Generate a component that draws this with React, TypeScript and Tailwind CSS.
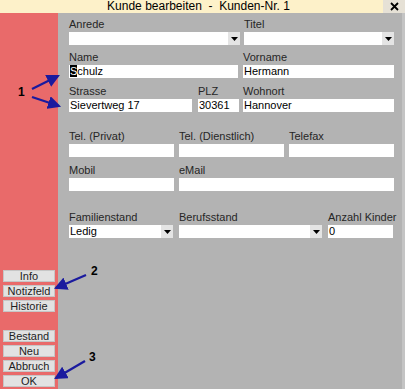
import React from 'react';

const Label = ({ text }: { text: string }) => (
  <div className="h-[12px] leading-[12px] text-[11px] text-[#262626] whitespace-nowrap">{text}</div>
);

const Input = ({ value = '', cursor = false }: { value?: string; cursor?: boolean }) => (
  <div className="h-[13px] bg-white text-[11px] leading-[13px] text-black pl-[1px] whitespace-nowrap overflow-hidden">
    {cursor ? (
      <>
        <span className="bg-black text-white">{value.charAt(0)}</span>
        {value.slice(1)}
      </>
    ) : (
      value
    )}
  </div>
);

const Select = ({ value = '' }: { value?: string }) => (
  <div className="h-[13px] bg-white flex text-[11px] leading-[13px] text-black">
    <span className="flex-1 pl-[1px] whitespace-nowrap overflow-hidden">{value}</span>
    <span className="w-[12px] bg-[#e4e4e4] flex items-center justify-center">
      <svg width="7" height="4" viewBox="0 0 7 4">
        <polygon points="0,0 7,0 3.5,4" fill="#000" />
      </svg>
    </span>
  </div>
);

const Field = ({ label, width, children }: { label: string; width: string; children: React.ReactNode }) => (
  <div className={`flex flex-col gap-[2px] ${width}`}>
    <Label text={label} />
    {children}
  </div>
);

const SideButton = ({ label }: { label: string }) => (
  <div className="h-[12px] bg-[#e2e2e2] border border-[#c6c6c6] text-[11px] leading-[10px] text-[#1e1e1e] text-center">
    {label}
  </div>
);

export default function App() {
  return (
    <div
      className="relative w-[405px] h-[389px] flex flex-col overflow-hidden"
      style={{ fontFamily: '"Liberation Sans", Arial, sans-serif' }}
    >
      {/* Title bar */}
      <div className="h-[13px] bg-[#fdf1c9] flex items-center">
        <div className="flex-1 text-center text-[12px] leading-[13px] text-black pl-[14px]">
          Kunde bearbeiten&nbsp; - &nbsp;Kunden-Nr. 1
        </div>
        <div className="w-[22px] h-[13px] bg-[#e6e1d6] flex items-center justify-center">
          <svg width="9" height="9" viewBox="0 0 9 9">
            <path d="M1 1 L8 8 M8 1 L1 8" stroke="#000" strokeWidth="1.8" />
          </svg>
        </div>
      </div>

      <div className="flex-1 flex">
        {/* Sidebar */}
        <div className="w-[58px] bg-[#e96a6a] flex flex-col px-[3px] pt-[257px]">
          <div className="flex flex-col gap-[3px]">
            <SideButton label="Info" />
            <SideButton label="Notizfeld" />
            <SideButton label="Historie" />
          </div>
          <div className="flex flex-col gap-[3px] mt-[18px]">
            <SideButton label="Bestand" />
            <SideButton label="Neu" />
            <SideButton label="Abbruch" />
            <SideButton label="OK" />
          </div>
        </div>

        {/* Form */}
        <div className="flex-1 bg-[#b3b3b3] border-r-[3px] border-[#c4c4c4] pl-[11px] pt-[5px]">
          <div className="flex gap-[4px]">
            <Field label="Anrede" width="w-[171px]"><Select /></Field>
            <Field label="Titel" width="w-[150px]"><Select /></Field>
          </div>
          <div className="flex gap-[5px] mt-[6px]">
            <Field label="Name" width="w-[169px]"><Input value="Schulz" cursor /></Field>
            <Field label="Vorname" width="w-[151px]"><Input value="Hermann" /></Field>
          </div>
          <div className="flex gap-[6px] mt-[7px]">
            <Field label="Strasse" width="w-[123px]"><Input value="Sievertweg 17" /></Field>
            <Field label="PLZ" width="w-[41px]"><Input value="30361" /></Field>
            <div className="ml-[-2px]">
              <Field label="Wohnort" width="w-[151px]"><Input value="Hannover" /></Field>
            </div>
          </div>
          <div className="flex gap-[5px] mt-[18px]">
            <Field label="Tel. (Privat)" width="w-[105px]"><Input /></Field>
            <Field label="Tel. (Dienstlich)" width="w-[105px]"><Input /></Field>
            <Field label="Telefax" width="w-[105px]"><Input /></Field>
          </div>
          <div className="flex gap-[5px] mt-[7px]">
            <Field label="Mobil" width="w-[105px]"><Input /></Field>
            <Field label="eMail" width="w-[215px]"><Input /></Field>
          </div>
          <div className="flex gap-[6px] mt-[20px]">
            <Field label="Familienstand" width="w-[104px]"><Select value="Ledig" /></Field>
            <Field label="Berufsstand" width="w-[143px]"><Select /></Field>
            <Field label="Anzahl Kinder" width="w-[65px]"><Input value="0" /></Field>
          </div>
        </div>
      </div>

      {/* Annotations */}
      <svg className="absolute inset-0 pointer-events-none" width="405" height="389" viewBox="0 0 405 389">
        <defs>
          <marker id="ah" markerWidth="6" markerHeight="6" refX="5" refY="3" orient="auto" markerUnits="strokeWidth">
            <path d="M0,0 L6,3 L0,6 Z" fill="#1a1a9e" />
          </marker>
        </defs>
        <g stroke="#1a1a9e" strokeWidth="2.2" fill="none" markerEnd="url(#ah)">
          <line x1="32" y1="89" x2="58" y2="76" />
          <line x1="32" y1="97" x2="59" y2="106" />
          <line x1="86" y1="275" x2="56" y2="288" />
          <line x1="85" y1="361" x2="56" y2="378" />
        </g>
      </svg>
      <span className="absolute left-[18px] top-[86px] text-[12px] leading-[12px] font-bold text-black">1</span>
      <span className="absolute left-[91px] top-[265px] text-[12px] leading-[12px] font-bold text-black">2</span>
      <span className="absolute left-[89px] top-[351px] text-[12px] leading-[12px] font-bold text-black">3</span>
    </div>
  );
}
